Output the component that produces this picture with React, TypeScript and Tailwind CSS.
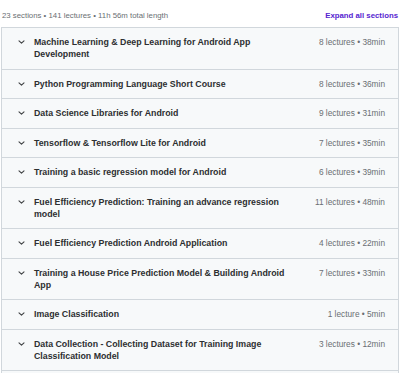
const sections = [
  { title: "Machine Learning & Deep Learning for Android App Development", meta: "8 lectures • 38min" },
  { title: "Python Programming Language Short Course", meta: "8 lectures • 36min" },
  { title: "Data Science Libraries for Android", meta: "9 lectures • 31min" },
  { title: "Tensorflow & Tensorflow Lite for Android", meta: "7 lectures • 35min" },
  { title: "Training a basic regression model for Android", meta: "6 lectures • 39min" },
  { title: "Fuel Efficiency Prediction: Training an advance regression model", meta: "11 lectures • 48min" },
  { title: "Fuel Efficiency Prediction Android Application", meta: "4 lectures • 22min" },
  { title: "Training a House Price Prediction Model & Building Android App", meta: "7 lectures • 33min" },
  { title: "Image Classification", meta: "1 lecture • 5min" },
  { title: "Data Collection - Collecting Dataset for Training Image Classification Model", meta: "3 lectures • 12min" },
];

function Chevron() {
  return (
    <svg width="7" height="12" viewBox="0 0 7 12" className="shrink-0">
      <polyline
        points="1,4.8 3.5,7.2 6,4.8"
        fill="none"
        stroke="#3e4143"
        strokeWidth="1.1"
        strokeLinecap="round"
        strokeLinejoin="round"
      />
    </svg>
  );
}

export default function App() {
  return (
    <div className="w-[400px] h-[373px] overflow-hidden bg-white font-['Liberation_Sans',Arial,sans-serif]">
      {/* Summary */}
      <div className="flex h-[27px] items-center justify-between px-[2px] pt-[5px]">
        <span className="text-[7.8px] leading-[10px] text-[#6a6f73]">
          23 sections • 141 lectures • 11h 56m total length
        </span>
        <span className="text-[7.8px] font-bold leading-[10px] text-[#5624d0]">
          Expand all sections
        </span>
      </div>

      {/* Sections */}
      <div className="mx-[1px] border-x border-t border-[#d1d7dc]">
        {sections.map((s) => (
          <div
            key={s.title}
            className="flex items-start border-b border-[#d1d7dc] bg-[#f7f9fa] py-[8.25px] pl-[16px] pr-[13px]"
          >
            <Chevron />
            <div className="ml-[9px] flex-1 text-[8.8px] font-bold leading-[12px] text-[#2d2f31]">
              {s.title}
            </div>
            <div className="w-[85px] shrink-0 text-right text-[8.3px] leading-[12px] text-[#6a6f73]">
              {s.meta}
            </div>
          </div>
        ))}
        {/* next section, cut off by the viewport */}
        <div className="h-[20px] bg-[#f7f9fa]" />
      </div>
    </div>
  );
}
